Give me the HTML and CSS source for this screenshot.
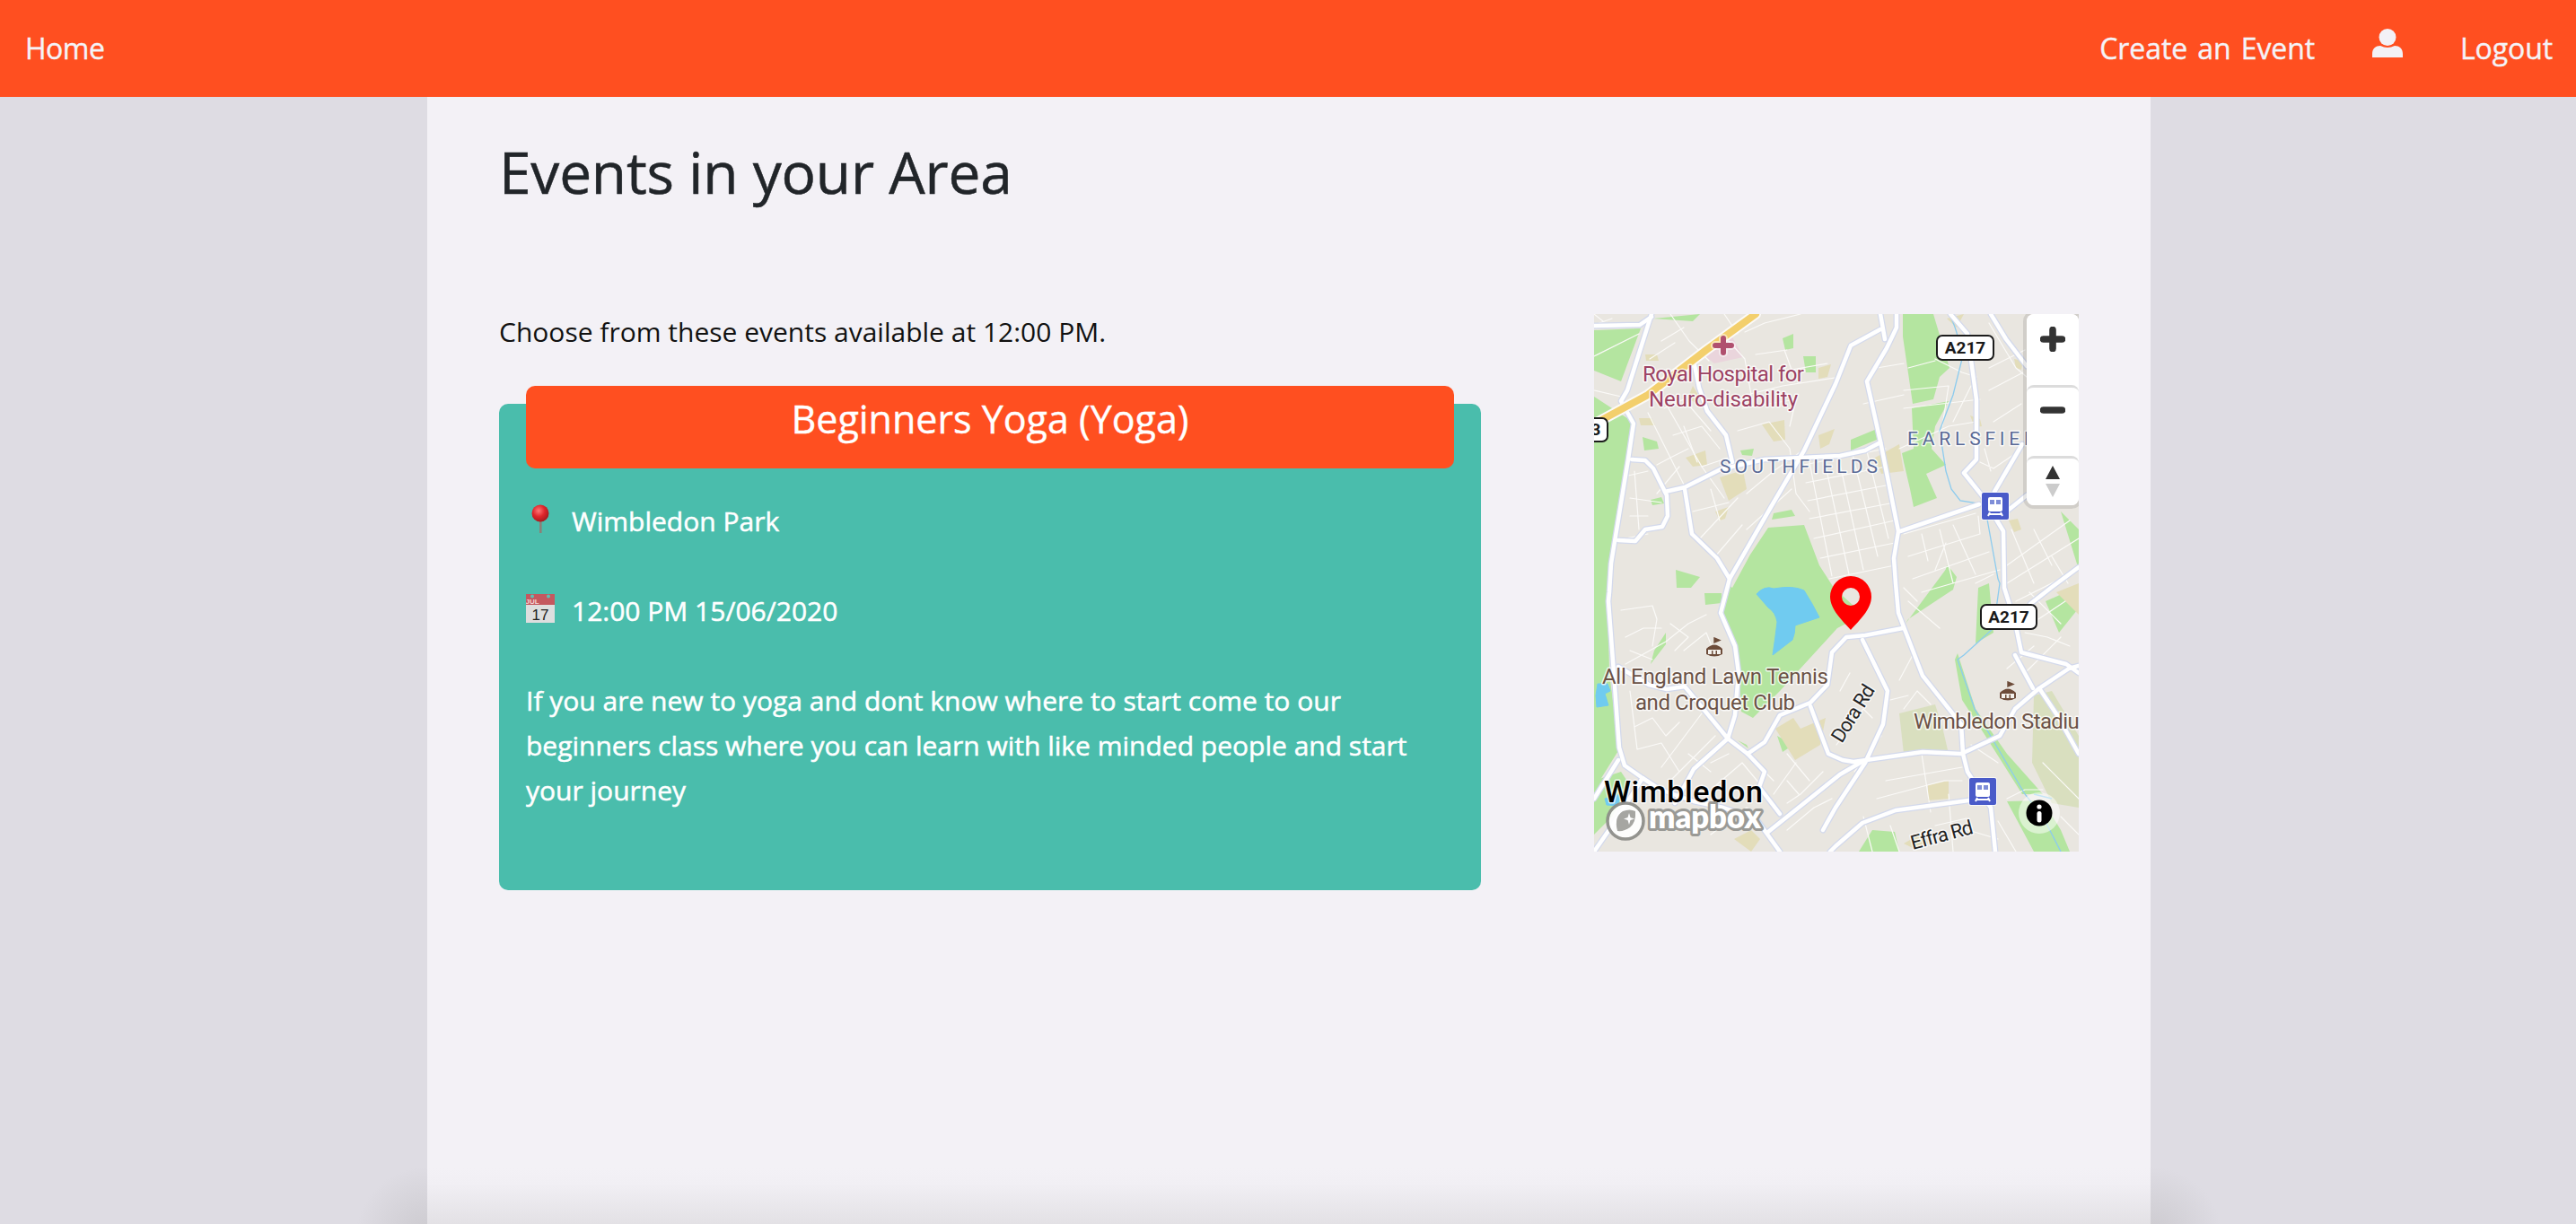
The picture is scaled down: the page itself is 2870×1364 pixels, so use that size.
FILE: index.html
```html
<!DOCTYPE html>
<html lang="en">
<head>
<meta charset="utf-8">
<title>Events in your Area</title>
<link rel="stylesheet" href="styles.css">
</head>
<body>
<nav class="nav">
  <a class="nav-link nav-home" href="#">Home</a>
  <div class="nav-right">
    <a class="nav-link" href="#">Create an Event</a>
    <svg class="user-icon" viewBox="0 0 34 32"><circle cx="17" cy="9.5" r="9.5"/><path d="M0 32v-4c0-6 4-9 9-9 3 1 5 2 8 2s5-1 8-2c5 0 9 3 9 9v4z"/></svg>
    <a class="nav-link" href="#">Logout</a>
  </div>
</nav>
<main class="column">
  <h1 class="title">Events in your Area</h1>
  <div class="row">
    <section class="events">
      <p class="intro">Choose from these events available at 12:00 PM.</p>
      <article class="card">
        <h2 class="card-title">Beginners Yoga (Yoga)</h2>
        <p class="meta">
          <svg class="emoji" viewBox="0 0 32 32"><defs><radialGradient id="ball" cx=".4" cy=".35" r=".7"><stop offset="0" stop-color="#f77"/><stop offset=".5" stop-color="#e0262b"/><stop offset="1" stop-color="#9d1a1e"/></radialGradient></defs><rect x="15" y="18" width="2.6" height="14" fill="#8b8178"/><circle cx="16" cy="10" r="9.5" fill="url(#ball)"/></svg>
          <span>Wimbledon Park</span>
        </p>
        <p class="meta">
          <svg class="emoji" viewBox="0 0 32 32"><rect width="32" height="32" fill="#dedede"/><rect width="32" height="12" fill="#c4585f"/><circle cx="7" cy="2.5" r="2" fill="#5fc0b5"/><circle cx="25" cy="2.5" r="2" fill="#5fc0b5"/><text class="cal-month" x="7" y="10.5">JUL</text><text class="cal-day" x="16" y="29">17</text></svg>
          <span>12:00 PM 15/06/2020</span>
        </p>
        <p class="desc">If you are new to yoga and dont know where to start come to our beginners class where you can learn with like minded people and start your journey</p>
      </article>
    </section>
    <div class="map">
      <svg class="map-canvas" viewBox="0 0 540 599" width="540" height="599">
        <defs>
          <g id="major">
            <path d="M64 0L37 85L30 97L44 122L38 162L19 278L17 310L16 320L22 400L28 483L34 503L54 517L74 530L111 543L144 550L181 563L207 599"/>
            <path d="M0 13L51 12L64 3"/>
            <path d="M111 52L117 82L126 108L147 135L154 165"/>
            <path d="M42 162L57 163L66 172L81 202L82 225L76 237L57 240L46 253L27 252"/>
            <path d="M79 198L101 193L141 173L190 162L274 158L302 152L319 143"/>
            <path d="M101 195L109 245L137 272L151 295"/>
            <path d="M319 17L286 35L269 78L234 152L197 215L151 295L141 333L157 370L161 400L157 447L149 473L111 507L104 520L90 545"/>
            <path d="M337 0L337 15L326 38L304 75L319 142L339 242L334 272L336 300L339 333L366 403L409 457L411 490L416 510L442 550L447 599"/>
            <path d="M319 0L324 28"/>
            <path d="M397 0L416 22L426 95L426 162L412 177L432 202L456 242L457 305L469 343L476 377L526 390L540 400"/>
            <path d="M341 242L429 212"/>
            <path d="M462 218L482 202L540 170"/>
            <path d="M446 198L477 145"/>
            <path d="M171 490L190 477L207 447L241 433L260 413L265 377L281 360L302 358L344 350"/>
            <path d="M27 393L61 413L81 418L101 415L149 473L171 490L190 510L184 527L207 557"/>
            <path d="M241 437L261 490L277 497L289 499L366 488L409 490L452 470L469 440L496 417L529 395L540 392"/>
            <path d="M299 363L327 420L322 457L302 500L269 550L255 575"/>
            <path d="M194 577L274 513L300 498"/>
            <path d="M417 542L336 553L299 567L269 593L263 599"/>
            <path d="M496 417L516 447L540 490"/>
            <path d="M469 380L489 417"/>
            <path d="M442 0L459 28L482 58"/>
            <path d="M540 282L509 305L486 323"/>
            <path d="M27 497L0 540"/>
            <path d="M0 599L27 560L54 517"/>
          </g>
        </defs>

        <rect class="land" width="540" height="599"/>

        <path class="green" d="M0 18L52 16L30 75L0 63Z"/>
        <path class="green" d="M0 92L40 118L45 130L15 290L17 400L28 485L0 530Z"/>
        <path class="green" d="M0 520L30 510L40 525L20 560L0 580Z"/>
        <path class="green" d="M194 238L234 235L251 280L267 305L300 335L271 350L207 420L177 450L164 443L161 383L144 343L147 300L154 305L174 268Z"/>
        <path class="green" d="M66 5L118 0L110 8Z"/>
        <path class="green" d="M210 27L222 22L222 38L213 40Z"/>
        <path class="green" d="M233 47L247 47L247 65L236 65Z"/>
        <path class="green" d="M54 137L70 142L72 150L56 152Z"/>
        <path class="green" d="M163 152L178 150L176 158L165 157Z"/>
        <path class="green" d="M63 207L75 204L78 211L65 213Z"/>
        <path class="green" d="M200 222L220 218L224 225L198 229Z"/>
        <path class="green" d="M91 285L118 293L108 305L92 305Z"/>
        <path class="green" d="M123 311L142 311L142 322L124 324Z"/>
        <path class="green" d="M67 375L80 355L80 368L63 390Z"/>
        <path class="green" d="M160 475L170 480L172 484Z"/>
        <path class="green" d="M204 470L222 480L210 488Z"/>
        <path class="green" d="M286 140L315 128L315 140L286 152Z"/>
        <path class="green" d="M344 0L378 0L396 60L385 70L378 95L355 100L344 25Z"/>
        <path class="green" d="M354 105L395 97L380 125L376 150L392 168L370 178L382 205L356 215L352 195L345 165L343 155L356 150Z"/>
        <path class="green" d="M393 280L398 285L404 293L400 307L385 312Z"/>
        <path class="green" d="M347 345L393 283L400 307L350 340Z"/>
        <path class="green" d="M428 305L440 300L445 355L425 367Z"/>
        <path class="green" d="M503 320L530 308L538 330L518 355Z"/>
        <path class="green" d="M520 220L540 240L540 285Z"/>
        <path class="green" d="M402 385L405 378L425 440L460 490L500 535L477 535L436 470L410 430Z"/>
        <path class="green" d="M460 543L500 542L520 575L530 599L490 599Z"/>
        <path class="green" d="M295 599L310 575L335 577L340 599Z"/>

        <path class="olive" d="M340 445L380 435L388 460L395 490L345 490Z"/>
        <path class="olive" d="M490 425L510 420L540 470L540 550L510 545L488 500Z"/>

        <path class="tan" d="M57 45L70 45L72 52L58 52Z"/>
        <path class="tan" d="M50 116L64 116L68 124L52 124Z"/>
        <path class="tan" d="M102 160L124 152L126 168L110 170Z"/>
        <path class="tan" d="M110 80L116 90L118 100L104 95Z"/>
        <path class="tan" d="M140 182L166 174L170 195L150 208Z"/>
        <path class="tan" d="M135 220L150 215L146 228L140 230Z"/>
        <path class="tan" d="M187 123L212 118L213 140L200 142Z"/>
        <path class="tan" d="M250 135L268 128L262 145L252 150Z"/>
        <path class="tan" d="M250 60L264 56L260 70L250 72Z"/>
        <path class="tan" d="M313 160L340 145L345 175L320 178Z"/>
        <path class="tan" d="M419 113L430 117L432 125L424 126Z"/>
        <path class="tan" d="M462 230L472 228L476 240L468 243Z"/>
        <path class="tan" d="M393 5L412 0L404 15Z"/>
        <path class="tan" d="M468 50L478 52L476 62L470 60Z"/>
        <path class="tan" d="M345 590L366 578L372 590L355 595Z"/>
        <path class="tan" d="M202 462L222 450L230 462L258 450L252 480L224 497Z"/>
        <path class="tan" d="M156 585L175 575L185 585L175 599Z"/>
        <path class="tan" d="M372 525L395 520L395 540L372 542Z"/>
        <path class="tan" d="M515 310L540 300L540 335Z"/>

        <path class="water" d="M181 312Q190 302 200 306Q222 302 234 308Q243 322 251 338L224 347Q224 356 221 363L199 380Q202 360 204 343Q202 332 194 327Z"/>
        <path class="water" d="M4 412L15 412L18 420L12 423L16 436L3 438L2 425Z"/>
        <path class="water" d="M12 540L30 535L26 548L14 547Z"/>

        <path class="hospital" d="M121 45L151 20L166 48L134 55Z"/>

        <g class="minor">
          <path d="M85 0L106 30L128 52M75 30L100 15M145 0L160 22M150 30L168 50L175 90M168 20L190 10L230 0M180 45L215 40M212 40L220 62L260 55M170 90L210 80L275 70"/>
          <path d="M62 50L90 32M60 110L85 160L100 190M80 100L120 170L145 205M160 130L195 120L218 150L225 200L240 220M165 105L225 95M225 95L218 125"/>
          <path d="M78 105L100 95L130 130M88 135L120 125L140 150M70 168L85 160L105 150M100 125L115 165M70 200L95 170M120 170L150 160"/>
          <path d="M38 180L60 175M40 205L75 210M40 225L60 225M35 250L60 245M45 175L50 240"/>
          <path d="M110 220L150 210M130 195L140 230M118 250L160 205M170 200L200 175L235 150M170 240L220 195M135 270L165 235"/>
          <path d="M234 168L325 150M236 188L325 170M238 208L330 190M240 228L335 210M245 250L335 230M252 272L335 255M262 295L335 280"/>
          <path d="M240 165L265 292M256 160L284 290M272 158L300 285M288 156L316 270M304 153L328 250"/>
          <path d="M340 150L395 125L426 120M345 105L430 95M300 100L345 90M315 60L345 55M350 60L380 52M380 50L410 65L426 70M345 85L395 80M395 80L388 125M420 80L400 120"/>
          <path d="M440 10L470 60L482 70M440 60L480 40M440 85L478 65M445 120L476 100M430 165L445 172L470 155M435 150L442 175"/>
          <path d="M345 245L425 222M350 270L430 245L428 225M355 295L440 265M365 310L452 285M365 245L372 275M385 240L400 300M400 235L425 290M392 255L380 285"/>
          <path d="M465 240L490 300M460 280L530 230M460 300L540 250M470 320L540 285M490 240L510 280M510 270L528 300"/>
          <path d="M30 330L65 325L70 340L65 370M35 360L55 350L75 350M40 375L65 385M35 390L80 365L105 345L125 335M85 345L105 360L90 375M100 375L125 355L135 380"/>
          <path d="M40 420L48 485M45 460L65 450L80 470L95 455M48 485L75 478L95 510M75 505L120 445M85 520L135 470M55 515L75 535M105 490L130 510M130 500L150 490"/>
          <path d="M136 525L165 500L190 530M120 525L145 550M180 500L200 520M215 545L230 535L255 510M215 490L240 520M215 520L228 535M200 535L225 500M130 580L170 550L185 560M215 575L245 550L265 540"/>
          <path d="M290 510L320 470M270 480L300 440L310 450M274 420L285 400M330 430L350 425M345 440L360 420L375 435M340 408L355 380"/>
          <path d="M325 520L410 505M315 540L390 520L410 520M330 570L340 599M300 560L310 599M365 490L375 555M395 535L400 599M420 480L450 500M400 570L450 585M380 570L415 562"/>
          <path d="M450 565L470 599M460 540L480 530L500 530M500 500L540 540M520 560L540 580M530 370L505 360L480 355M480 400L520 360M495 340L525 320M485 310L520 345M460 395L490 370"/>
          <path d="M425 300L445 290M345 305L360 320M350 320L385 350M0 12L20 5M0 47L50 22M0 0L10 8M0 85L30 92"/>
        </g>

        <path class="stream" d="M395 0Q405 15 410 50L400 90L385 130L392 175L398 195L408 208L435 212L450 295L452 300L445 350L412 380L405 385L424 440L480 535L500 560L520 599"/>
        <path class="stream" d="M490 535L510 540"/>

        <use href="#major" class="casing"/>
        <use href="#major" class="road"/>

        <path class="trunk-case" d="M-10 128L60 90L125 40L180 0"/>
        <path class="trunk" d="M-10 128L60 90L125 40L180 0"/>

        <path class="cross-halo" d="M144 27V43M135 35H153"/>
        <path class="cross" d="M144 27V43M135 35H153"/>

        <text class="lbl lbl-poi" x="144" y="75" text-anchor="middle" textLength="180">Royal Hospital for</text>
        <text class="lbl lbl-poi" x="144" y="103" text-anchor="middle" textLength="166">Neuro-disability</text>
        <text class="lbl lbl-area" x="140" y="177" textLength="176">SOUTHFIELDS</text>
        <text class="lbl lbl-area" x="349" y="146" textLength="160">EARLSFIELD</text>
        <text class="lbl lbl-sport" x="135" y="412" text-anchor="middle" textLength="252">All England Lawn Tennis</text>
        <text class="lbl lbl-sport" x="135" y="441" text-anchor="middle" textLength="178">and Croquet Club</text>
        <text class="lbl lbl-sport" x="356" y="462" textLength="205">Wimbledon Stadium</text>
        <text class="lbl lbl-place" x="11" y="544" textLength="177">Wimbledon</text>
        <text class="lbl lbl-street" transform="translate(276 479) rotate(-58)" textLength="71">Dora Rd</text>
        <text class="lbl lbl-street" transform="translate(355 597) rotate(-15)" textLength="71">Effra Rd</text>

        <rect class="shield" x="-20" y="116" width="35" height="26" rx="6"/>
        <text class="shield-text" x="2" y="135" text-anchor="middle">3</text>
        <rect class="shield" x="382" y="24" width="63" height="27" rx="6"/>
        <text class="shield-text" x="413.5" y="44" text-anchor="middle">A217</text>
        <rect class="shield" x="431" y="324" width="62" height="27" rx="6"/>
        <text class="shield-text" x="462" y="344" text-anchor="middle">A217</text>

        <g id="stadium" class="stadium" transform="translate(125 361)">
          <path class="stadium-flag" d="M9 0L9 6M9 0L15 2.500L9 5Z"/>
          <path d="M0 12Q9 3 18 12V18Q9 23 0 18Z"/>
          <path class="stadium-gap" d="M2 13H16V18H12V14H10.500V18H7.500V14H6V18H2Z"/>
        </g>
        <use href="#stadium" x="327" y="49"/>

        <g id="station" transform="translate(432 199)">
          <rect class="station-halo" x="-1" y="-1" width="32" height="32" rx="3"/>
          <rect class="station" width="30" height="30" rx="2"/>
          <path class="station-train" d="M9 5H21Q23 5 23 7V19Q23 21 21 21H9Q7 21 7 19V7Q7 5 9 5Z"/>
          <path class="station-win" d="M9 8H14V13H9ZM16 8H21V13H16Z"/>
          <path class="station-track" d="M9 22L7 26M21 22L23 26M8 24H22"/>
        </g>
        <use href="#station" x="-14" y="318"/>

        <path class="pin" fill-rule="evenodd" d="M286 292a23 23 0 0 1 23 23c0 14-14 27-23 37c-9-10-23-23-23-37a23 23 0 0 1 23-23zM286 305a10 10 0 1 0 0 20a10 10 0 1 0 0-20z"/>

        <circle class="logo-ring" cx="35" cy="565" r="20"/>
        <path class="logo-leaf" d="M26 576Q22 560 32 554Q40 551 46 554Q47 566 40 572Q33 577 26 576Z"/>
        <path class="logo-star" d="M39 556L40.500 561L45 562.500L40.500 564L39 569L37.500 564L33 562.500L37.500 561Z"/>
        <text class="logo-text" x="61" y="573" textLength="125" lengthAdjust="spacingAndGlyphs">mapbox</text>

        <circle class="info-halo" cx="496" cy="556" r="23"/>
        <circle class="info" cx="496" cy="556" r="14.500"/>
        <path class="info-i" d="M496 556.500V564"/>
        <circle class="info-dot" cx="496" cy="549" r="2.600"/>
      </svg>
      <div class="controls">
        <button class="ctrl ctrl-zoom" type="button" aria-label="Zoom in">
          <svg class="ctrl-icon" viewBox="0 0 24 24"><path d="M12 3V21M3 12H21"/></svg>
        </button>
        <button class="ctrl ctrl-zoom" type="button" aria-label="Zoom out">
          <svg class="ctrl-icon" viewBox="0 0 24 24"><path d="M3 12H21"/></svg>
        </button>
        <button class="ctrl ctrl-compass" type="button" aria-label="Reset bearing">
          <svg class="ctrl-compass-icon" viewBox="0 0 16 36"><path class="needle-up" d="M8 0L16 15H0Z"/><path class="needle-down" d="M0 20H16L8 35Z"/></svg>
        </button>
      </div>
    </div>
  </div>
</main>
</body>
</html>
```

FILE: styles.css
```css
* { box-sizing: border-box; }
html, body { margin: 0; padding: 0; }
body {
  height: 1364px;
  overflow: hidden;
  padding-left: 2px;
  background-color: #dedce3;
  background-image:
    radial-gradient(circle 80px at 476px 1380px, #cbc9ce, rgba(222, 220, 227, 0)),
    radial-gradient(circle 80px at 2396px 1380px, #cbc9ce, rgba(222, 220, 227, 0));
  font-family: "Open Sans", "Noto Sans", sans-serif;
  color: #212529;
}
.nav {
  height: 108px;
  margin-left: -2px;
  background: #ff4f20;
  display: flex;
  align-items: center;
  justify-content: space-between;
  padding: 0 26px 0 28px;
}
.nav-link {
  color: #f5f3f7;
  font-size: 32px;
  line-height: 44px;
  text-decoration: none;
  letter-spacing: -0.1px;
  word-spacing: 3px;
  -webkit-text-stroke: .4px currentColor;
}
.nav-home { letter-spacing: -0.5px; }
.nav-right { display: flex; align-items: center; gap: 64px; }
.user-icon { width: 34px; height: 32px; fill: #f3f1f6; margin-top: -12px; }

.column {
  width: 1920px;
  height: 1256px;
  margin: 0 auto;
  background: linear-gradient(to bottom, #f3f1f6 calc(100% - 62px), #f1eff4 calc(100% - 45px), #e3e1e5 100%);
  padding: 0 80px;
}
.title {
  margin: 0;
  padding-top: 40px;
  height: 242px;
  font-size: 64px;
  line-height: 88px;
  font-weight: 400;
  letter-spacing: -0.2px;
  -webkit-text-stroke: .5px currentColor;
  color: #212529;
}
.row { display: flex; align-items: flex-start; gap: 126px; }
.events { width: 1094px; flex: none; }
.intro {
  margin: 0;
  font-size: 30px;
  line-height: 40px;
  color: #111;
}
.card {
  margin-top: 60px;
  height: 542px;
  background: #4abdac;
  border-radius: 10px;
  color: #fff;
  padding: 0 30px;
}
.card-title {
  margin: 0;
  position: relative;
  top: -20px;
  height: 92px;
  background: #ff4f20;
  border-radius: 10px;
  text-align: center;
  font-size: 43px;
  line-height: 74px;
  font-weight: 400;
  -webkit-text-stroke: .4px currentColor;
}
.meta {
  margin: 0 0 50px;
  height: 50px;
  display: flex;
  align-items: center;
  gap: 19px;
  font-size: 30px;
  font-weight: 500;
  line-height: 50px;
  -webkit-text-stroke: .5px currentColor;
}
.meta:first-of-type { margin-top: 14px; }
.emoji { width: 32px; height: 32px; flex: none; margin-top: -6px; -webkit-text-stroke: 0; }
.cal-month { font: 700 8px "Liberation Sans", sans-serif; fill: #f5d5d5; text-anchor: middle; }
.cal-day { font: 400 17px "Liberation Sans", sans-serif; fill: #222; text-anchor: middle; }
.desc {
  margin: 0;
  font-size: 30px;
  font-weight: 500;
  line-height: 50px;
  -webkit-text-stroke: .5px currentColor;
}

.map { position: relative; width: 540px; height: 599px; flex: none; overflow: hidden; }
.map-canvas { display: block; }
.land { fill: #e9e6e0; }
.green { fill: #b4e5a0; }
.olive { fill: #d9dfbf; }
.tan { fill: #e3ddba; }
.water { fill: #70cbf0; stroke: #70cbf0; stroke-width: 1; }
.hospital { fill: #ead5dc; }
.minor { fill: none; stroke: #fbfaf8; stroke-width: 1.2; stroke-linejoin: round; stroke-linecap: round; }
.stream { fill: none; stroke: #8ccbee; stroke-width: 1.3; }
.casing, .road, .trunk, .trunk-case { fill: none; stroke-linejoin: round; stroke-linecap: round; }
.casing { stroke: #d3d9ec; stroke-width: 7; }
.road { stroke: #fff; stroke-width: 4.500; }
.trunk-case { stroke: #fbfaf8; stroke-width: 12; }
.trunk { stroke: #f3cf6c; stroke-width: 8; }
.cross-halo { fill: none; stroke: #fff; stroke-width: 10; stroke-linecap: round; opacity: .5; }
.cross { fill: none; stroke: #b0506f; stroke-width: 6; stroke-linecap: round; }
.lbl {
  font-family: "Roboto", sans-serif;
  paint-order: stroke;
  stroke: rgba(255, 255, 255, .75);
  stroke-width: 3px;
  stroke-linejoin: round;
}
.lbl-poi { font-size: 24px; fill: #9c4263; }
.lbl-area { font-size: 21px; fill: #5a6a96; }
.lbl-sport { font-size: 24px; fill: #6b5246; }
.lbl-place { font-size: 34px; font-weight: 500; fill: #000; }
.lbl-street { font-size: 22px; fill: #222; }
.shield { fill: #fff; stroke: #1c1c1c; stroke-width: 2; }
.shield-text { font: 700 19px "Roboto", sans-serif; fill: #1a1a1a; }
.stadium { fill: #6d4c3a; stroke: #fff; stroke-width: .6; paint-order: stroke; }
.stadium-flag { stroke: #6d4c3a; stroke-width: 1.400; fill: #6d4c3a; }
.stadium-gap { fill: #f4f1ec; stroke: none; }
.station-halo { fill: #fff; opacity: .7; }
.station { fill: #4a5bc9; }
.station-train { fill: #fff; }
.station-win { fill: #7f8ed8; }
.station-track { fill: none; stroke: #fff; stroke-width: 2; }
.pin { fill: #f00; }
.logo-ring { fill: #fff; stroke: #8c8c88; stroke-width: 3.500; opacity: .92; }
.logo-leaf { fill: #a6a6a2; }
.logo-star { fill: #fff; }
.logo-text {
  font: 800 36px "Lato", sans-serif;
  fill: #fff;
  paint-order: stroke;
  stroke: #9a9a96;
  stroke-width: 6px;
  stroke-linejoin: round;
}
.info-halo { fill: #fff; opacity: .5; }
.info { fill: #000; }
.info-i { fill: none; stroke: #fff; stroke-width: 5; stroke-linecap: round; }
.info-dot { fill: #fff; }

.controls {
  position: absolute;
  top: 0;
  right: 0;
  width: 58px;
  display: flex;
  flex-direction: column;
  box-shadow: 0 0 0 4px rgba(0, 0, 0, .1);
  border-radius: 8px;
  background: #fff;
}
.ctrl {
  display: flex;
  align-items: flex-start;
  justify-content: center;
  width: 58px;
  padding: 0;
  border: 0;
  background: #fff;
  border-radius: 8px;
}
.ctrl + .ctrl { border-top: 3px solid #dcdcdc; }
.ctrl-zoom { height: 79px; }
.ctrl-compass { height: 55px; }
.ctrl-icon { display: block; width: 28px; height: 28px; margin-top: 14px; fill: none; stroke: #333; stroke-width: 6.500; stroke-linecap: round; }
.ctrl + .ctrl .ctrl-icon { margin-top: 11px; }
.ctrl-compass-icon { display: block; width: 16px; height: 36px; margin-top: 8px; }
.needle-up { fill: #333; }
.needle-down { fill: #ccc; }
```
